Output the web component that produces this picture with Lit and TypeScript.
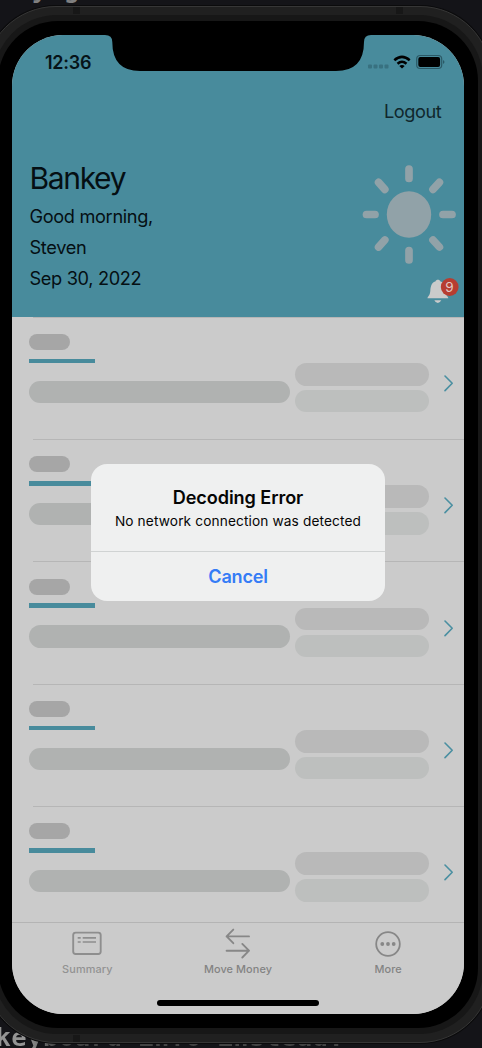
import { LitElement, html, css, svg } from "lit";
import { customElement } from "lit/decorators.js";

@customElement("account-row")
export class AccountRow extends LitElement {
  static styles = css`
    :host { display: flex; height: 122.35px; box-sizing: border-box; position: relative; padding: 17.4px 9px 0 17.4px; }
    .rule { position: absolute; left: 21.4px; right: 0; top: 0; height: 1px; background: #b6b6b6; }
    .left { width: 262px; }
    .tag { width: 41px; height: 16px; border-radius: 8px; background: #a6a6a6; }
    .bar { width: 65.5px; height: 4.6px; margin-top: 8.7px; background: #488b9c; }
    .name { width: 261px; height: 22.4px; margin-top: 17.3px; border-radius: 11.5px; background: #b0b2b1; }
    .right { width: 134px; margin: 29.1px 0 0 4.1px; }
    .a, .b { height: 22.5px; border-radius: 11.5px; background: #b9b9b9; }
    .b { margin-top: 4.3px; background: #bdbfbe; }
    svg { margin: 40px 0 0 14.3px; width: 12px; height: 18px; flex: none; }
  `;
  render() {
    return html`<div class="rule"></div>
      <div class="left"><div class="tag"></div><div class="bar"></div><div class="name"></div></div>
      <div class="right"><div class="a"></div><div class="b"></div></div>
      <svg viewBox="0 0 12 18"><path d="M2 2L9.2 9.3L2 16.6" fill="none" stroke="#4a8fa1" stroke-width="1.6" stroke-linecap="round" stroke-linejoin="round"/></svg>`;
  }
}

const rays = [
  [47, 8, 47, 17.5], [47, 89.5, 47, 99], [4.5, 53.5, 13, 53.5], [81, 53.5, 90, 53.5],
  [16.6, 21.4, 22.8, 28.4], [77.4, 21.4, 71, 28.4], [16.6, 86, 22.8, 79], [77.4, 86, 71, 79],
];

@customElement("app-root")
export class AppRoot extends LitElement {
  static styles = css`
    :host { display: block; position: relative; width: 482px; height: 1048px; overflow: hidden; background: #141418; font-family: Inter, sans-serif; color: #050f13; box-sizing: border-box; padding-top: 6px; }
    .code { position: absolute; white-space: pre; font: bold 25.5px/30px "DejaVu Sans Mono", monospace; letter-spacing: .5px; color: #808080; left: -4.5px; }
    .code.top { left: 32px; top: -26px; }
    .code.bottom { top: 1022px; color: transparent; background: linear-gradient(90deg, #949494 32px, #444 60px); -webkit-background-clip: text; background-clip: text; }
    .device { position: relative; width: 508px; height: 1037px; margin-left: -16px; border-radius: 72px; box-sizing: border-box; padding: 8px; background: #202020; border: 1px solid #363636; box-shadow: 0 0 0 1px #0b0b0c; }
    .frame { height: 100%; border-radius: 64px; background: #171717; padding: 6px 5px; box-sizing: border-box; }
    .bezel { height: 100%; border-radius: 60px; background: #000; padding: 14px; box-sizing: border-box; }
    .screen { position: relative; width: 452px; height: 979px; border-radius: 51px; overflow: hidden; background: #cbcbcb; display: flex; flex-direction: column; }
    .notch { position: absolute; left: 91px; top: 0; width: 270px; height: 37px; }
    .seam { position: absolute; width: 7px; height: 7px; background: #171717; }
    .s1 { left: 88px; top: 0; }
    .s2 { left: 411px; top: 0; }
    .s3 { left: 88px; bottom: 0; }
    .head { height: 282px; flex: none; background: #488b9c; display: flex; flex-direction: column; }
    .status { height: 50px; flex: none; display: flex; align-items: center; justify-content: space-between; padding: 0 17px 0 33px; }
    .time { font-size: 18px; line-height: 20px; font-weight: 600; color: #061318; letter-spacing: -.25px; margin-top: 3px; padding-top: 3px; }
    .status svg { width: 80px; height: 18px; margin-top: 1px; }
    .logout { align-self: flex-end; margin: 14px 22.8px 0 0; font-size: 18.2px; line-height: 24px; color: #10272d; letter-spacing: -.45px; }
    .hero { display: flex; justify-content: space-between; padding: 34px 4px 0 17.5px; }
    h1 { margin: 2px 0 4px; font-size: 30px; line-height: 38px; font-weight: 400; letter-spacing: -1.35px; }
    .hero p { margin: 0; font-size: 18.2px; line-height: 31.2px; letter-spacing: -.34px; }
    .art { width: 98px; height: 158px; margin-top: 4px; }
    .list { flex: 1; overflow: hidden; margin-top: -.4px; }
    .tabs { height: 92px; flex: none; box-sizing: border-box; border-top: 1.5px solid #b4b4b4; display: grid; grid-template-columns: repeat(3, 1fr); background: #cbcbcb; }
    .tab { display: flex; flex-direction: column; align-items: center; font-size: 10.9px; line-height: 14px; font-weight: 500; color: #838383; letter-spacing: .1px; }
    .tab svg { width: 34px; height: 34px; margin: 4px 0 0; }
    .tab span { margin-top: 1px; }
    .first { color: #929292; }
    .last { padding-right: 1px; }
    .home { position: absolute; left: 145px; bottom: 8.5px; width: 162px; height: 5.5px; border-radius: 3px; background: #000; }
    .alert { position: absolute; left: 79px; top: 429px; width: 294px; height: 136.5px; border-radius: 16px; background: #eff0f0; text-align: center; display: flex; flex-direction: column; color: #050505; }
    .msg { height: 88.4px; box-sizing: border-box; padding-top: 22px; border-bottom: 1.5px solid #d0d3d3; }
    .msg strong { display: block; font-size: 18.1px; line-height: 23px; font-weight: 600; letter-spacing: -.08px; }
    .msg span { display: block; font-size: 13.7px; line-height: 24px; letter-spacing: .12px; }
    .cancel { font-size: 18.1px; line-height: 48px; font-weight: 600; color: #357cf6; letter-spacing: -.25px; }
  `;
  render() {
    return html`
      <div class="code top">y g</div>
      <div class="code bottom">keyboard info instead.</div>
      <div class="device">
        <div class="seam s1"></div><div class="seam s2"></div><div class="seam s3"></div>
        <div class="frame"><div class="bezel"><div class="screen">
          <div class="head">
            <div class="status"><span class="time">12:36</span>
              <svg viewBox="0 0 80 18">
                <g fill="#387180"><rect x="1" y="12.5" width="4" height="4" rx="1"/><rect x="6.5" y="12.5" width="4" height="4" rx="1"/><rect x="12" y="12.5" width="4" height="4" rx="1"/><rect x="17.5" y="12.5" width="4" height="4" rx="1"/></g>
                <g transform="translate(0 1.2)"><g fill="none" stroke="#000" stroke-width="2.5"><path d="M27.3 7.1Q35 .3 42.7 7.1"/><path d="M30.5 10.5Q35 6.5 39.5 10.5"/></g>
                <path d="M32.3 12.7Q35 10.7 37.7 12.7L35 15.4Z"/></g>
                <g transform="translate(0 1.2)"><rect x="49.7" y="2.3" width="25" height="13" rx="3.5" fill="none" stroke="#2b5966" stroke-width="1.2"/>
                <rect x="51.3" y="3.9" width="21.8" height="9.8" rx="2"/><path d="M76 6.8Q79 8.8 76 10.8Z" fill="#2b5966"/></g>
              </svg></div>
            <div class="logout">Logout</div>
            <div class="hero">
              <div><h1>Bankey</h1><p>Good morning,</p><p>Steven</p><p>Sep 30, 2022</p></div>
              <svg class="art" viewBox="0 0 98 158">
                <g stroke="#91a2a8" stroke-width="7.7" stroke-linecap="round">${rays.map(r => svg`<line x1=${r[0]} y1=${r[1]} x2=${r[2]} y2=${r[3]}/>`)}</g>
                <ellipse cx="47" cy="53.5" rx="22.2" ry="23.3" fill="#91a2a8"/>
                <path d="M65.5 137.3C65.5 135.5 68 134.8 68.3 130C68.6 123.5 70.8 121 73.4 120.4C74 118.2 77.8 118.2 78.4 120.4C81 121 83.2 123.5 83.5 130C83.8 134.8 86.3 135.5 86.3 137.3Z" fill="#cbcbcb"/>
                <path d="M72.3 139.2H79.3Q77.8 142 75.8 142T72.3 139.2Z" fill="#cbcbcb"/>
                <circle cx="87.7" cy="126" r="8.9" fill="#b73d31"/>
                <text x="87.4" y="130.8" text-anchor="middle" font-size="13.5" fill="#e2c9c6">9</text>
              </svg>
            </div>
          </div>
          <div class="list">${[0, 1, 2, 3, 4].map(() => html`<account-row></account-row>`)}</div>
          <div class="tabs">
            <div class="tab first"><svg viewBox="0 0 34 34" fill="none" stroke="#8e8e8e" stroke-width="1.9"><rect x="3.2" y="5.6" width="27.5" height="21.4" rx="2.5"/><path d="M7.7 10.9H10.7M12.7 10.9H26M7.7 15H10.7M12.7 15H26" stroke-width="1.6"/></svg><span>Summary</span></div>
            <div class="tab"><svg viewBox="0 0 34 34" fill="none" stroke="#878787" stroke-width="1.9" stroke-linecap="round" stroke-linejoin="round"><path d="M28 9.4H5.6M12.3 2.6L5.6 9.4L12.3 16.2M5.6 23.7H28M21.3 16.9L28 23.7L21.3 30.5"/></svg><span>Move Money</span></div>
            <div class="tab last"><svg viewBox="0 0 34 34"><circle cx="17" cy="17" r="11.8" fill="none" stroke="#878787" stroke-width="1.8"/><g fill="#878787"><circle cx="11.3" cy="17" r="1.9"/><circle cx="17" cy="17" r="1.9"/><circle cx="22.7" cy="17" r="1.9"/></g></svg><span>More</span></div>
          </div>
          <svg class="notch" viewBox="0 0 270 37"><path d="M2 0Q9.3 0 9.3 7Q9.3 36 37 36H233Q261 36 261 7Q261 0 268 0Z"/></svg>
          <div class="home"></div>
          <div class="alert"><div class="msg"><strong>Decoding Error</strong><span>No network connection was detected</span></div><div class="cancel">Cancel</div></div>
        </div></div></div>
      </div>`;
  }
}
